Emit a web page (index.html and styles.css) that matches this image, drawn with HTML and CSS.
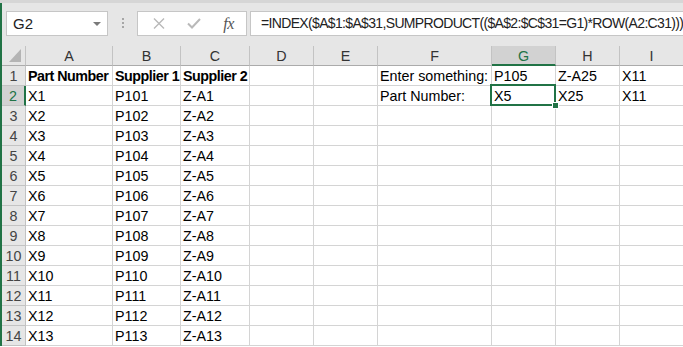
FILE: index.html
```html
<!DOCTYPE html>
<html lang="en">
<head>
  <meta charset="UTF-8">
  <title>Book1 - Excel</title>
  <link rel="stylesheet" href="styles.css">
</head>
<body>
  <div class="top-edge"></div>
  <div class="app">
    <div class="formula-bar">
      <div class="name-box">
        <span>G2</span>
        <span class="name-arrow"></span>
      </div>
      <div class="grip"><i></i><i></i><i></i></div>
      <div class="fx-buttons">
        <span class="fx-btn">
          <svg width="12" height="11" viewBox="0 0 12 11"><path d="M1 0.5 L11 10.5 M11 0.5 L1 10.5" stroke="#b9b9b9" stroke-width="1.4" fill="none"/></svg>
        </span>
        <span class="fx-btn">
          <svg width="14" height="11" viewBox="0 0 14 11"><path d="M1 5.5 L5 9.5 L13 1" stroke="#b9b9b9" stroke-width="2" fill="none"/></svg>
        </span>
        <span class="fx-btn fx-label">fx</span>
      </div>
      <div class="formula-input">=INDEX($A$1:$A$31,SUMPRODUCT(($A$2:$C$31=G1)*ROW(A2:C31)))</div>
    </div>

    <div id="sheet" class="sheet"></div>
  </div>

  <script>
    const sheet = document.getElementById('sheet');
    const cols = ['A', 'B', 'C', 'D', 'E', 'F', 'G', 'H', 'I'];

    // first two rows are hand typed, the rest is the part list
    const rows = [
      ['Part Number', 'Supplier 1', 'Supplier 2', '', '', 'Enter something:', 'P105', 'Z-A25', 'X11'],
      ['X1', 'P101', 'Z-A1', '', '', 'Part Number:', 'X5', 'X25', 'X11']
    ];
    for (let n = 2; n <= 13; n++) {
      rows.push(['X' + n, 'P' + (100 + n), 'Z-A' + n, '', '', '', '', '', '']);
    }

    function cell(cls, text) {
      const el = document.createElement('div');
      el.className = cls;
      el.textContent = text;
      sheet.appendChild(el);
      return el;
    }

    const corner = cell('corner', '');
    corner.innerHTML = '<svg width="12" height="13" viewBox="0 0 12 13"><polygon points="12,0 12,13 0,13" fill="#b4b4b4"/></svg>';
    cols.forEach(c => cell(c === 'G' ? 'col-head active' : 'col-head', c));

    rows.forEach((row, i) => {
      cell(i === 1 ? 'row-head active' : 'row-head', i + 1);
      row.forEach((val, j) => {
        let cls = 'cell';
        if (i === 0 && j < 3) cls += ' bold';
        if (i === 1 && j === 6) cls += ' selected';
        cell(cls, val);
      });
    });
  </script>
</body>
</html>
```

FILE: styles.css
```css
body {
  margin: 0;
  overflow: hidden;
  background: #fff;
  font-family: "Liberation Sans", Arial, sans-serif;
  color: #000;
}
.top-edge {
  height: 3px;
  background: #d6d6d6;
}
.app {
  border-left: 2px solid #217346;
}
.formula-bar {
  display: flex;
  align-items: flex-start;
  height: 43px;
  padding-top: 8px;
  box-sizing: border-box;
  background: #e6e6e6;
  white-space: nowrap;
}
.name-box {
  display: flex;
  align-items: center;
  justify-content: space-between;
  margin-left: 4px;
  width: 102px;
  height: 25px;
  box-sizing: border-box;
  padding: 0 6px 0 6px;
  background: #fff;
  border: 1px solid #c6c6c6;
  font-size: 15px;
  color: #222;
}
.name-arrow {
  width: 0;
  height: 0;
  border-left: 4px solid transparent;
  border-right: 4px solid transparent;
  border-top: 4px solid #7a7a7a;
}
.grip {
  display: flex;
  flex-direction: column;
  gap: 2px;
  margin: 7px 13px 0 14px;
}
.grip i {
  width: 2px;
  height: 2px;
  background: #a6a6a6;
}
.fx-buttons {
  display: flex;
  align-items: center;
  width: 110px;
  height: 25px;
  box-sizing: border-box;
  padding-left: 3px;
  background: #fff;
  border: 1px solid #c6c6c6;
}
.fx-btn {
  display: flex;
  justify-content: center;
  align-items: center;
  width: 36px;
}
.fx-label {
  font-family: "Liberation Serif", "Times New Roman", serif;
  font-style: italic;
  font-size: 16px;
  color: #555;
  letter-spacing: -0.5px;
}
.formula-input {
  flex: 1;
  margin-left: 3px;
  height: 25px;
  box-sizing: border-box;
  padding-left: 10px;
  line-height: 23px;
  background: #fff;
  border: 1px solid #c6c6c6;
  border-right: none;
  overflow: hidden;
  font-size: 14px;
  letter-spacing: -0.66px;
  color: #222;
}
.sheet {
  display: grid;
  grid-template-columns: 24px 87px 68px 69px 64px 64px 114px 64px 64px 64px;
  grid-auto-rows: 20px;
  font-size: 14.3px;
}
.corner,
.col-head,
.row-head {
  box-sizing: border-box;
  background: #e6e6e6;
  border-right: 1px solid #c3c3c3;
  border-bottom: 1px solid #c3c3c3;
  color: #333;
}
.corner {
  display: flex;
  justify-content: flex-end;
  align-items: flex-end;
  padding: 0 4px 3px 0;
  border-bottom-color: #ababab;
}
.col-head {
  text-align: center;
  line-height: 19px;
  padding-top: 1px;
  border-bottom-color: #ababab;
}
.col-head.active {
  background: #d2d2d2;
  color: #217346;
  border-bottom: 2px solid #217346;
}
.row-head {
  text-align: center;
  line-height: 17px;
  padding-top: 2px;
  color: #444;
}
.row-head.active {
  background: #d2d2d2;
  color: #217346;
  border-right: 2px solid #217346;
}
.cell {
  position: relative;
  box-sizing: border-box;
  padding: 2px 0 0 2px;
  line-height: 17px;
  border-right: 1px solid #d4d4d4;
  border-bottom: 1px solid #d4d4d4;
  white-space: nowrap;
}
.cell.bold {
  font-weight: bold;
  letter-spacing: -0.5px;
}
.cell.selected::after {
  content: "";
  position: absolute;
  top: -2px;
  left: -2px;
  right: -1px;
  bottom: -1px;
  border: 2px solid #217346;
}
.cell.selected::before {
  content: "";
  position: absolute;
  right: -4px;
  bottom: -4px;
  width: 5px;
  height: 5px;
  background: #217346;
  border: 1px solid #fff;
  z-index: 2;
}
```
